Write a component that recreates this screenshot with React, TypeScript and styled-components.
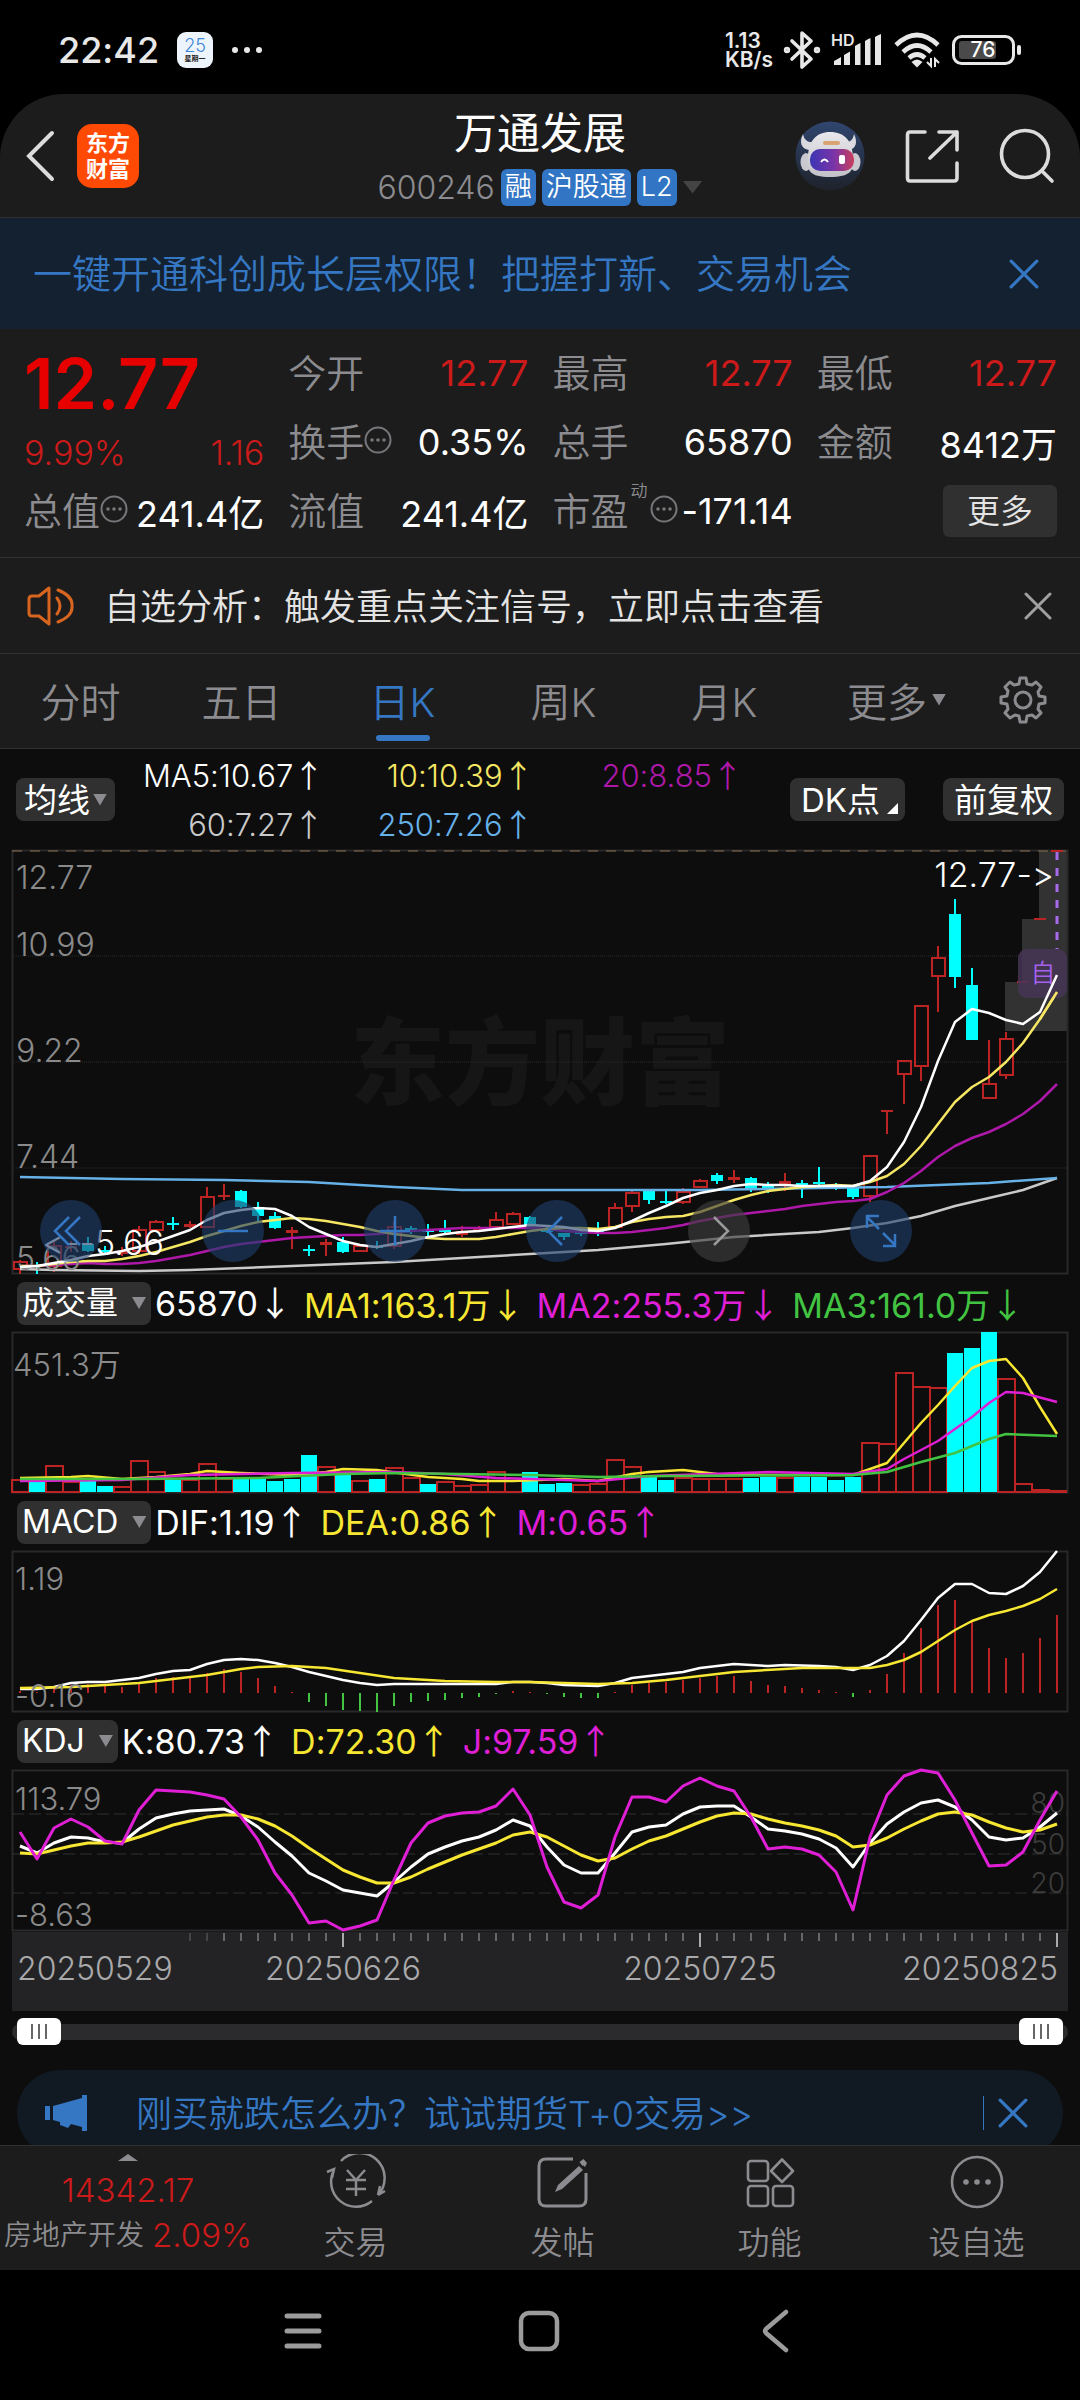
import React, { useState } from 'react';
import styled, { createGlobalStyle, css } from 'styled-components';

const color = {
  page: '#0d0d0d',
  panel: '#1c1c1c',
  line: '#303032',
  chip: '#303030',
  blue: '#3577c2',
  muted: '#8c8c90',
  text: '#e4e4e4',
  red: '#cc1a1a',
  candleRed: '#bb2423',
  cyan: '#00ffff',
  yellow: '#f7e733',
  softYellow: '#f5e663',
  magenta: '#df1fd6',
  purple: '#ad18a8',
  green: '#42c342',
  sky: '#66b1e8',
};

const fontStack = 'Inter, "Noto Sans CJK SC", sans-serif';

const GlobalStyle = createGlobalStyle`
  * { box-sizing: border-box; }
  body {
    margin: 0;
    background: #000;
    color: #fff;
    font-family: ${fontStack};
    font-weight: 350;
    font-feature-settings: "calt" 0;
  }
  button {
    padding: 0;
    border: 0;
    background: none;
    color: inherit;
    font: inherit;
    cursor: pointer;
  }
  a { color: inherit; text-decoration: none; }
  svg { display: block; flex: none; }
`;

const Phone = styled.div`
  min-height: 100vh;
  display: flex;
  flex-direction: column;
  background: #000;
`;

/* ---------- status bar ---------- */

const StatusBar = styled.div`
  height: 94px;
  padding: 6px 58px 0;
  display: flex;
  align-items: center;
  justify-content: space-between;
  color: #e8e8e8;
`;

const StatusGroup = styled.div<{ $gap: number }>`
  display: flex;
  align-items: center;
  gap: ${p => p.$gap}px;
`;

const Clock = styled.time`
  font-size: 36px;
  font-weight: 500;
`;

const CalendarBadge = styled.span`
  width: 36px;
  height: 36px;
  border-radius: 9px;
  background: #eef4fb;
  display: flex;
  flex-direction: column;
  align-items: center;
  justify-content: center;
  color: #3b86d8;
  font-size: 18px;
  line-height: 18px;
`;

const CalendarDay = styled.small`
  color: #222;
  font-size: 7px;
  line-height: 8px;
  font-weight: 700;
`;

const NetSpeed = styled.span`
  font-size: 21px;
  line-height: 19px;
  font-weight: 600;
`;

const StatusSvg = styled.svg`
  overflow: visible;
`;

/* ---------- app header ---------- */

const AppPanel = styled.div`
  flex: 1;
  display: flex;
  flex-direction: column;
  background: ${color.page};
  border-radius: 64px 64px 0 0;
  overflow: hidden;
`;

const Header = styled.header`
  display: grid;
  grid-template-columns: 1fr auto 1fr;
  align-items: center;
  padding: 12px 25px 3px;
  background: ${color.panel};
  border-bottom: 1px solid ${color.line};
`;

const HeaderSide = styled.div<{ $end?: boolean }>`
  display: flex;
  align-items: center;
  justify-content: ${p => (p.$end ? 'flex-end' : 'flex-start')};
  gap: ${p => (p.$end ? 40 : 22)}px;
  padding-bottom: 8px;
`;

const BrandLogo = styled.a`
  width: 62px;
  height: 64px;
  border-radius: 15px;
  background: #ff4a05;
  display: grid;
  place-content: center;
  text-align: center;
  font-size: 22px;
  line-height: 26px;
  font-weight: 700;
`;

const TitleBlock = styled.div`
  display: flex;
  flex-direction: column;
  align-items: center;
`;

const StockName = styled.h1`
  margin: 0;
  font-size: 43px;
  line-height: 54px;
  font-weight: 400;
`;

const CodeLine = styled.div`
  height: 54px;
  display: flex;
  align-items: center;
  gap: 6px;
  color: ${color.muted};
  font-size: 32px;
`;

const Badge = styled.span`
  height: 37px;
  padding: 0 4px;
  border-radius: 6px;
  background: #3175c4;
  color: #fff;
  font-size: 27px;
  line-height: 36px;
`;

const Triangle = styled.span<{ $up?: boolean; $w: number; $h: number; $c?: string }>`
  display: inline-block;
  flex: none;
  width: ${p => p.$w}px;
  height: ${p => p.$h}px;
  background: ${p => p.$c || color.muted};
  clip-path: ${p => (p.$up ? 'polygon(50% 0, 100% 100%, 0 100%)' : 'polygon(0 0, 100% 0, 50% 100%)')};
`;

/* ---------- banners ---------- */

const Promo = styled.div`
  height: 111px;
  padding: 0 41px 0 33px;
  display: flex;
  align-items: center;
  justify-content: space-between;
  background: #142130;
  color: ${color.blue};
  font-size: 39px;
`;

const PromoText = styled.a`
  padding-bottom: 6px;
`;

const Notice = styled.div`
  height: 96px;
  padding: 0 28px 0 26px;
  display: flex;
  align-items: center;
  background: ${color.panel};
  border-bottom: 1px solid ${color.line};
  color: ${color.text};
  font-size: 36px;
`;

const NoticeText = styled.a`
  flex: 1;
  margin-left: 28px;
  padding-bottom: 4px;
`;

/* ---------- quote ---------- */

const Quote = styled.section`
  display: grid;
  grid-template-columns: repeat(4, 1fr);
  grid-auto-rows: 69px;
  column-gap: 24px;
  padding: 9px 23px 12px 24px;
  background: ${color.panel};
  border-bottom: 1px solid ${color.line};
`;

const PriceBlock = styled.div`
  grid-row: span 2;
  display: flex;
  flex-direction: column;
`;

const Price = styled.strong`
  color: #e60000;
  font-size: 70px;
  line-height: 92px;
  font-weight: 600;
`;

const Change = styled.div`
  display: flex;
  justify-content: space-between;
  color: ${color.red};
  font-size: 34px;
  line-height: 46px;
`;

const Cell = styled.div`
  display: flex;
  align-items: center;
  justify-content: space-between;
  white-space: nowrap;
`;

const CellLabel = styled.span`
  display: flex;
  align-items: center;
  padding-bottom: 4px;
  color: ${color.muted};
  font-size: 38px;
`;

const CellNote = styled.sup`
  align-self: flex-start;
  margin: 0 2px;
  font-size: 17px;
  line-height: 20px;
`;

const CellValue = styled.span<{ $red?: boolean }>`
  font-size: 36px;
  font-weight: 400;
  color: ${p => (p.$red ? color.red : '#fff')};
`;

const MoreButton = styled.button`
  justify-self: end;
  align-self: center;
  width: 114px;
  height: 52px;
  border-radius: 6px;
  background: ${color.chip};
  color: ${color.text};
  font-size: 33px;
  line-height: 48px;
`;

/* ---------- period tabs ---------- */

const Tabs = styled.nav`
  height: 95px;
  padding-right: 22px;
  display: grid;
  grid-template-columns: repeat(5, 161fr) 183fr 70fr;
  background: ${color.panel};
  border-bottom: 1px solid ${color.line};
`;

const Tab = styled.button<{ $active?: boolean }>`
  position: relative;
  display: flex;
  align-items: center;
  justify-content: center;
  gap: 5px;
  padding-bottom: 3px;
  font-size: 40px;
  color: ${color.muted};
  ${p =>
    p.$active &&
    css`
      color: ${color.blue};
      &::after {
        content: '';
        position: absolute;
        left: 50%;
        bottom: 7px;
        width: 54px;
        height: 6px;
        margin-left: -27px;
        border-radius: 3px;
        background: ${color.blue};
      }
    `}
`;

/* ---------- indicator headings ---------- */

const Averages = styled.div`
  height: 101px;
  padding: 0 16px;
  display: flex;
  align-items: center;
`;

const AverageGrid = styled.div`
  flex: 1;
  max-width: 628px;
  margin-right: auto;
  display: grid;
  grid-template-columns: repeat(3, 1fr);
  grid-auto-rows: 49px;
  align-items: center;
  justify-items: end;
`;

const Reading = styled.span<{ $c: string; $small?: boolean }>`
  color: ${p => p.$c};
  font-size: ${p => (p.$small ? 31 : 34)}px;
  font-weight: ${p => (p.$small ? 350 : 400)};
  white-space: nowrap;
`;

const Arrow = styled.span`
  font-family: "Noto Sans CJK SC", sans-serif;
  line-height: 1;
`;

const Chip = styled.button<{ $pad?: number }>`
  height: 43px;
  padding: 0 ${p => p.$pad ?? 8}px;
  border-radius: 8px;
  background: ${color.chip};
  display: flex;
  align-items: center;
  gap: 3px;
  font-size: 33px;
  line-height: 40px;
  font-weight: 400;
  white-space: nowrap;
`;

const ChipGroup = styled.div`
  display: flex;
  gap: 38px;
`;

const Corner = styled.span`
  width: 11px;
  height: 11px;
  margin: 18px -4px 0 4px;
  background: #fff;
  clip-path: polygon(100% 0, 100% 100%, 0 100%);
`;

const IndicatorBar = styled.div`
  height: 58px;
  padding: 0 17px;
  display: flex;
  align-items: center;
  gap: 12px;
`;

const IndicatorLead = styled.div`
  display: flex;
  align-items: center;
  gap: 4px;
`;

const IndicatorChip = styled(Chip)`
  padding: 0 5px;
  gap: 14px;
  font-size: 32px;
`;

/* ---------- charts ---------- */

const ChartFrame = styled.div`
  position: relative;
  margin: 0 12px;
`;

const ChartSvg = styled.svg`
  width: 100%;
  height: auto;
  overflow: visible;
  font-family: ${fontStack};
`;

const ChartTools = styled.div`
  position: absolute;
  left: 28px;
  bottom: 12px;
  display: flex;
  gap: 100px;
`;

const ToolButton = styled.button<{ $off?: boolean }>`
  width: 62px;
  height: 62px;
  border-radius: 50%;
  display: grid;
  place-items: center;
  color: ${p => (p.$off ? '#9a9a9a' : color.blue)};
  background: ${p => (p.$off ? 'rgba(62, 62, 62, 0.65)' : 'rgba(30, 62, 106, 0.62)')};
`;

const RangeRow = styled.div`
  position: relative;
  height: 60px;
  margin: 0 12px;
  padding-top: 14px;
`;

const RangeTrack = styled.div`
  height: 16px;
  border-radius: 8px;
  background: #2b2b2d;
`;

const RangeInput = styled.input`
  appearance: none;
  position: absolute;
  top: 8px;
  left: 5px;
  width: calc(100% - 10px);
  height: 27px;
  margin: 0;
  background: transparent;
  pointer-events: none;
  &::-webkit-slider-thumb {
    appearance: none;
    pointer-events: auto;
    width: 44px;
    height: 27px;
    border-radius: 6px;
    background:
      linear-gradient(#666, #666) 14px 50% / 2px 15px no-repeat,
      linear-gradient(#666, #666) 21px 50% / 2px 15px no-repeat,
      linear-gradient(#666, #666) 28px 50% / 2px 15px no-repeat,
      #fff;
  }
`;

/* ---------- bottom ---------- */

const PillWindow = styled.div`
  height: 75px;
  margin: 0 17px;
  overflow: hidden;
`;

const Pill = styled.div`
  height: 86px;
  padding: 0 35px 0 28px;
  border-radius: 43px;
  display: flex;
  align-items: center;
  background: #111a23;
  color: ${color.blue};
  font-size: 36px;
`;

const PillText = styled.a`
  flex: 1;
  margin-left: 49px;
  padding-bottom: 5px;
`;

const PillDivider = styled.span`
  width: 1px;
  height: 34px;
  margin-right: 14px;
  background: ${color.blue};
`;

const BottomNav = styled.nav`
  height: 125px;
  display: grid;
  grid-template-columns: 252fr repeat(4, 207fr);
  background: ${color.panel};
  border-top: 1px solid ${color.line};
`;

const IndexLink = styled.a`
  padding: 8px 0 0 4px;
  display: flex;
  flex-direction: column;
  align-items: center;
  color: ${color.red};
  font-size: 33px;
  line-height: 45px;
  white-space: nowrap;
`;

const IndexValue = styled.span`
  margin-top: 7px;
`;

const IndexLine = styled.span`
  display: flex;
  align-items: center;
  gap: 8px;
`;

const Sector = styled.span`
  color: ${color.muted};
  font-size: 28px;
`;

const NavLink = styled.a`
  padding-top: 8px;
  display: flex;
  flex-direction: column;
  align-items: center;
  gap: 10px;
  color: ${color.muted};
  font-size: 32px;
  line-height: 46px;
`;

const SystemNav = styled.div`
  height: 130px;
  padding: 0 2px 8px 0;
  display: flex;
  align-items: center;
  justify-content: center;
`;

const SystemKey = styled.button`
  width: 236px;
  height: 60px;
  display: grid;
  place-items: center;
  color: #9b9b9b;
`;

/* ---------- data ---------- */

type Candle = [kind: 'r' | 'c', high: number, top: number, bottom: number, low: number];

const candles: Candle[] = [
  ['r', 410, 412, 419, 424], ['c', 412, 415, 417, 424], ['r', 391, 396, 416, 422], ['r', 391, 396, 398, 402],
  ['c', 387, 394, 401, 402], ['c', 396, 400, 402, 403], ['r', 397, 401, 404, 406], ['r', 376, 380, 401, 404],
  ['r', 370, 372, 380, 382], ['c', 367, 373, 375, 380], ['r', 371, 374, 377, 378], ['r', 337, 347, 377, 377],
  ['r', 334, 345, 347, 350], ['c', 340, 341, 357, 358], ['c', 352, 357, 366, 371], ['c', 362, 366, 378, 379],
  ['r', 377, 380, 383, 399], ['c', 395, 399, 401, 406], ['r', 389, 392, 395, 406], ['c', 387, 392, 402, 403],
  ['r', 394, 396, 401, 402], ['c', 391, 396, 398, 399], ['r', 371, 377, 396, 399], ['c', 376, 378, 380, 384],
  ['c', 374, 380, 381, 386], ['c', 370, 380, 382, 383], ['r', 376, 381, 385, 387], ['r', 376, 378, 380, 382],
  ['r', 362, 370, 377, 378], ['r', 362, 364, 374, 375], ['c', 366, 367, 375, 376], ['c', 377, 380, 382, 383],
  ['c', 383, 383, 387, 390], ['c', 377, 382, 383, 386], ['c', 372, 380, 382, 386], ['r', 353, 358, 377, 378],
  ['r', 339, 343, 356, 362], ['c', 340, 341, 350, 354], ['c', 340, 351, 353, 354], ['r', 338, 342, 352, 354],
  ['r', 329, 331, 337, 338], ['c', 323, 325, 331, 334], ['r', 320, 327, 330, 333], ['c', 327, 328, 339, 342],
  ['c', 332, 336, 337, 343], ['r', 323, 331, 334, 341], ['c', 330, 333, 336, 348], ['c', 317, 332, 334, 336],
  ['c', 333, 334, 336, 340], ['c', 338, 338, 347, 349], ['r', 305, 306, 346, 352], ['r', 260, 260, 262, 284],
  ['r', 210, 211, 224, 254], ['r', 155, 156, 216, 231], ['r', 96, 108, 126, 162], ['c', 49, 64, 127, 138],
  ['c', 118, 135, 190, 190], ['r', 190, 234, 248, 248], ['r', 182, 189, 225, 229], ['r', 132, 131, 133, 133],
  ['r', 69, 68, 70, 70], ['r', 0, 0, 1, 1],
];

const ma5 = [417,416,413,410,406,404,401,397,392,386,380,370,363,360,358,359,366,377,384,391,395,397,394,391,387,384,382,381,379,377,375,376,377,380,381,378,371,363,356,348,343,340,336,334,335,335,336,336,336,336,331,317,292,257,211,172,159,163,170,174,162,125];
const ma10 = [416,416,414,412,411,411,409,406,402,397,392,386,381,376,372,370,368,369,371,374,377,381,384,386,388,389,389,389,387,384,381,379,378,378,379,377,372,369,367,366,362,356,350,345,341,339,337,336,335,336,332,326,314,296,274,252,237,227,212,193,169,142];
const ma20 = [416,416,415,414,413,414,414,413,411,408,405,401,397,394,392,390,388,387,386,385,385,384,382,381,380,379,378,378,378,378,378,379,381,382,383,383,382,380,378,375,371,368,365,363,361,359,356,354,352,351,349,342,333,321,307,296,288,282,274,264,251,234];

type Sparse = [index: number, y: number][];
const ma60: Sparse = [[0,419],[2,420],[7,421],[10,420],[16,416],[22,412],[27,407],[31,403],[34,400],[38,394],[42,387],[47,382],[49,378],[51,373],[53,366],[55,356],[57,348],[59,340],[61,328]];
const ma250: Sparse = [[0,327],[6,329],[12,330],[17,332],[22,337],[26,340],[31,340],[40,340],[47,338],[51,337],[57,333],[61,328]];

const volumes = [147,149,133,149,149,154,154,128,139,148,147,131,146,147,147,149,147,123,134,143,148,147,135,145,152,149,153,152,139,148,140,152,151,152,151,127,134,145,148,145,146,146,146,146,145,145,145,145,148,145,110,111,40,54,55,21,16,0,46,151,157,158];
const volumeKinds = 'rcrrccrrrcrrrcccccrcrcrrcrrrrrcccrrrrccrrrrccrccccrrrrrcccrrrr';
const volMa1: Sparse = [[0,146],[3,145],[4,144],[6,147],[8,145],[10,142],[11,139],[13,141],[16,143],[18,140],[19,137],[21,138],[24,145],[26,147],[27,149],[29,149],[32,147],[34,149],[36,142],[37,140],[39,138],[41,142],[44,143],[49,143],[51,131],[52,111],[53,91],[54,73],[55,54],[56,36],[57,29],[58,27],[59,46],[60,75],[61,102]];
const volMa2: Sparse = [[0,149],[6,148],[10,143],[16,141],[22,140],[25,142],[28,146],[34,149],[37,144],[44,140],[49,142],[51,137],[52,127],[54,109],[55,97],[56,85],[57,71],[58,60],[59,61],[61,70]];
const volMa3: Sparse = [[0,147],[7,147],[14,146],[19,142],[22,141],[30,143],[34,145],[38,144],[49,143],[51,140],[53,130],[55,121],[57,107],[58,102],[61,104]];

const macdBars = [140,141,137,134,133,135,136,132,127,126,126,122,118,121,127,135,141,151,155,159,160,161,155,151,150,149,147,146,143,140,141,143,146,147,147,141,134,132,131,129,127,125,125,130,134,135,137,139,141,146,139,123,102,77,54,49,69,97,107,102,87,64];
const dif: Sparse = [[0,138],[1,138],[2,136],[3,132],[4,131],[5,131],[6,129],[7,127],[8,123],[9,120],[10,119],[11,113],[12,109],[13,108],[14,109],[15,112],[16,116],[17,121],[18,125],[19,129],[20,132],[21,134],[22,133],[28,133],[29,131],[30,131],[31,132],[32,134],[34,135],[35,132],[36,127],[37,125],[38,123],[39,121],[40,117],[41,115],[42,113],[43,114],[44,115],[45,114],[47,115],[48,116],[49,119],[50,114],[51,105],[52,90],[53,69],[54,47],[55,33],[56,33],[57,42],[58,43],[59,35],[60,21],[61,0]];
const dea: Sparse = [[0,137],[3,136],[7,132],[11,124],[13,118],[14,116],[16,115],[18,117],[20,122],[22,127],[25,130],[28,131],[30,131],[34,133],[36,132],[38,129],[40,125],[42,121],[46,117],[50,117],[51,114],[52,109],[53,101],[54,90],[55,79],[56,70],[57,64],[58,60],[59,55],[60,48],[61,38]];

const kLine = [76,83,73,67,68,72,73,59,48,44,41,40,39,46,57,72,86,103,111,120,123,126,112,97,84,77,71,67,60,50,56,77,95,103,103,83,62,57,55,44,37,36,36,47,59,61,64,69,78,97,73,54,42,33,30,37,50,67,70,68,57,43];
const dLine = [83,84,80,76,73,73,72,67,61,55,51,47,45,45,49,56,66,78,89,100,107,113,113,107,99,92,85,79,73,65,62,67,76,85,91,88,79,71,66,59,52,46,43,44,49,53,56,60,66,77,75,68,59,51,44,42,45,52,58,62,60,54];
const jLine = [62,89,58,49,57,71,74,40,20,21,22,25,29,47,70,103,125,153,151,160,156,150,110,73,53,46,43,42,36,19,45,97,132,138,125,67,27,27,32,16,8,16,21,47,79,77,79,85,102,140,67,25,6,0,3,30,63,96,95,82,50,21];

const xAt = (i: number) => 8 + 17 * i;
const dense = (ys: number[]) => ys.map((y, i) => `${xAt(i)},${y}`).join(' ');
const sparse = (pts: Sparse) => pts.map(([i, y]) => `${xAt(i)},${y}`).join(' ');

/* ---------- small drawings ---------- */

const Line = ({ points, stroke, w = 2.5 }: { points: string; stroke: string; w?: number }) => (
  <polyline points={points} fill="none" stroke={stroke} strokeWidth={w} strokeLinejoin="round" />
);

const CloseIcon = ({ size = 28, stroke = color.blue, w = 3 }) => (
  <svg width={size} height={size} viewBox="0 0 28 28" stroke={stroke} strokeWidth={w} strokeLinecap="round">
    <path d="M2 2 26 26M26 2 2 26" />
  </svg>
);

const InfoIcon = () => (
  <svg width="28" height="28" viewBox="0 0 28 28">
    <circle cx="14" cy="14" r="12.5" fill="none" stroke="#77777b" strokeWidth="2" />
    {[8, 14, 20].map(x => <circle key={x} cx={x} cy="14" r="1.8" fill="#77777b" />)}
  </svg>
);

const BluetoothIcon = () => (
  <StatusSvg width="36" height="40" viewBox="0 0 36 40" fill="none" stroke="#e8e8e8" strokeWidth="3.6" strokeLinejoin="round" strokeLinecap="round">
    <path d="M8 11 27 29 18 37V3L27 11 8 29" />
    <circle cx="3" cy="20" r="1.4" /><circle cx="33" cy="20" r="1.4" />
  </StatusSvg>
);

const SignalIcon = () => (
  <StatusSvg width="52" height="36" viewBox="0 0 52 36" fill="#e8e8e8">
    <text x="0" y="14" fontSize="16" fontWeight="600">HD</text>
    <path d="M3 33V29Q7 27 10 25V33zM13 23Q16 21 19 19.500V33H13zM24 14Q27 12 29.500 11V33H24zM34 9Q37 7 39.500 6V33H34zM44 5Q47 3 50 2V33H44z" />
  </StatusSvg>
);

const WifiIcon = () => (
  <StatusSvg width="47" height="36" viewBox="0 0 47 36" fill="none" stroke="#e8e8e8" strokeWidth="4.6">
    <path d="M2 13Q23 -7 44 13M9 20Q23 7 37 20M15 26Q23 19 31 26" />
    <path d="M17.500 30Q23 25 28.500 30L23 35.500z" fill="#e8e8e8" stroke="none" />
    <path d="M37 26V34L33 30M41 35V27L45 31" strokeWidth="2" />
  </StatusSvg>
);

const BatteryIcon = () => (
  <StatusSvg width="70" height="30" viewBox="0 0 70 30">
    <rect x="1.500" y="1.500" width="60" height="27" rx="8" fill="none" stroke="#e8e8e8" strokeWidth="3" />
    <rect x="7" y="6" width="37" height="18" rx="3" fill="#4a4a4a" />
    <rect x="65" y="10" width="4" height="10" rx="2" fill="#e8e8e8" />
    <text x="31" y="22" textAnchor="middle" fontSize="21" fontWeight="500" fill="#fff">76</text>
  </StatusSvg>
);

const RobotIcon = () => (
  <svg width="70" height="70" viewBox="0 0 70 70">
    <defs>
      <linearGradient id="sky" x1="0" y1="0" x2="0" y2="1">
        <stop offset="0" stopColor="#30466f" /><stop offset="1" stopColor="#1e222b" />
      </linearGradient>
      <linearGradient id="visor" x1="0" y1="0" x2="1" y2="0">
        <stop offset="0" stopColor="#3b36b4" /><stop offset=".55" stopColor="#7b34a8" /><stop offset="1" stopColor="#c93e5c" />
      </linearGradient>
      <linearGradient id="helmet" x1="0" y1="0" x2="0" y2="1">
        <stop offset="0" stopColor="#e8e8ec" /><stop offset="1" stopColor="#c3c2c8" />
      </linearGradient>
    </defs>
    <circle cx="35" cy="35" r="34.500" fill="url(#sky)" />
    <path d="M8 13C4 21 6 28 14 29L20 21C13 22 9 19 8 13zM59 13C63 21 61 28 54 29L48 21C55 22 58 19 59 13z" fill="#d9d9de" />
    <ellipse cx="11" cy="41" rx="5.500" ry="9" fill="#c9c8cf" />
    <ellipse cx="60" cy="41" rx="5.500" ry="9" fill="#c9c8cf" />
    <path d="M35 11C50 11 57 20 58 35C60 50 55 56 35 56C15 56 11 50 13 35C14 20 21 11 35 11z" fill="url(#helmet)" />
    <rect x="28" y="20" width="17" height="4" rx="2" fill="#d9a374" />
    <rect x="15" y="28" width="44" height="22" rx="10" fill="url(#visor)" />
    <path d="M26 41Q29.500 36 33 41" fill="none" stroke="#fff" strokeWidth="2" />
    <rect x="44" y="34" width="6" height="9" rx="2" fill="#fff" />
  </svg>
);

const GearIcon = () => {
  const teeth = Array.from({ length: 8 }, (_, k) => k * 45);
  const outline = teeth
    .map(deg => [-15, -9, 9, 15].map((off, n) => {
      const r = n === 1 || n === 2 ? 22 : 17;
      const a = ((deg + off - 90) * Math.PI) / 180;
      return `${Math.round(24 + r * Math.cos(a))},${Math.round(24 + r * Math.sin(a))}`;
    }).join(' '))
    .join(' ');
  return (
    <svg width="48" height="48" viewBox="0 0 48 48" fill="none" stroke={color.muted} strokeWidth="3" strokeLinejoin="round">
      <polygon points={outline} />
      <circle cx="24" cy="24" r="8" />
    </svg>
  );
};

const navIcons = {
  trade: (
    <svg width="62" height="56" viewBox="0 0 62 56" fill="none" stroke={color.muted} strokeWidth="2.500">
      <path d="M16 7A25 25 0 0 1 53 41M53 41 55 32M53 41 60 37" />
      <path d="M47 47A25 25 0 0 1 9 16M2 18 9 15 7 24" />
      <path d="M22 16 31 26 40 16M21 26H41M21 35H41M31 26V42" />
    </svg>
  ),
  post: (
    <svg width="54" height="56" viewBox="0 0 54 56" fill="none" stroke={color.muted} strokeWidth="3">
      <path d="M37 5H10Q3 5 3 12V45Q3 52 10 52H43Q50 52 50 45V19" />
      <path d="M43 12 47 16 26 35 19 38 22 31zM45 9 48 6 51 9 49 13z" fill={color.muted} stroke="none" />
      <path d="M45 10 49 7" strokeWidth="5" />
    </svg>
  ),
  features: (
    <svg width="50" height="56" viewBox="0 0 50 56" fill="none" stroke={color.muted} strokeWidth="2.600" strokeLinejoin="round">
      <rect x="3" y="7" width="20" height="20" rx="3" />
      <rect x="3" y="32" width="20" height="20" rx="3" />
      <rect x="28" y="32" width="20" height="20" rx="3" />
      <path d="M37 5.500 48 17 37 28 26 17z" />
    </svg>
  ),
  watch: (
    <svg width="54" height="56" viewBox="0 0 54 56">
      <circle cx="27" cy="28" r="25" fill="none" stroke={color.muted} strokeWidth="2.600" />
      {[16, 27, 38].map(x => <circle key={x} cx={x} cy="28" r="2.800" fill={color.muted} />)}
    </svg>
  ),
};

const toolIcons = [
  { name: '最左', path: 'M17 5 3 19 17 33M28 5 14 19 28 33' },
  { name: '缩小', path: 'M4 19H34' },
  { name: '放大', path: 'M4 19H34M19 4V34' },
  { name: '左移', path: 'M24 5 10 19 24 33' },
  { name: '右移', path: 'M14 5 28 19 14 33', off: true },
  { name: '全屏', path: 'M17 17 5 5M5 16V4H17M21 21 33 33M33 22V34H21' },
];

/* ---------- charts ---------- */

const label = { fill: '#8a8a8a', fontSize: 31 };

const PriceChart = () => (
  <ChartSvg viewBox="0 0 1056 424" role="img" aria-label="日K线">
    <text x="338" y="248" fontSize="95" fontWeight="900" fill="#161616">东方财富</text>
    <path d="M1027 0H1055V181H993V132H1010V69H1027z" fill="#323232" />
    <rect x="0.500" y="0.500" width="1055" height="423" fill="none" stroke="#29292b" strokeWidth="2" />
    <path d="M0 106H1056M0 212H1056M0 318H1056" stroke="#2a2a2a" strokeDasharray="1 1" />
    <path d="M0 1H1056" stroke="#8b7152" strokeDasharray="10 8" />
    {candles.map(([kind, high, top, bottom, low], i) => {
      const c = kind === 'r' ? color.candleRed : color.cyan;
      const hollow = kind === 'r' && bottom - top > 4;
      const h = Math.max(bottom - top, 2);
      return (
        <g key={i} stroke={c} strokeWidth="2" fill={hollow ? 'none' : c}>
          {high < top && <path d={`M${xAt(i)} ${high}V${top}`} />}
          {low > bottom && <path d={`M${xAt(i)} ${bottom}V${low}`} />}
          {hollow
            ? <rect x={xAt(i) - 6} y={top} width="13" height={h} />
            : <rect x={xAt(i) - 6} y={top} width="12" height={h} stroke="none" />}
        </g>
      );
    })}
    <Line points={sparse(ma60)} stroke="#c9c9c9" />
    <Line points={sparse(ma250)} stroke={color.sky} />
    <Line points={dense(ma20)} stroke={color.purple} />
    <Line points={dense(ma10)} stroke={color.softYellow} />
    <g {...label} fontSize="32">
      <text x="4" y="39">12.77</text>
      <text x="4" y="106">10.99</text>
      <text x="4" y="212">9.22</text>
      <text x="4" y="318">7.44</text>
      <text x="4" y="420">5.66</text>
    </g>
    <path d="M1045 2V99" stroke="#a66bea" strokeWidth="3" strokeDasharray="8 8" />
    <rect x="1006" y="99" width="49" height="49" rx="9" fill="#463556" fillOpacity=".85" />
    <text x="1031" y="132" fontSize="25" textAnchor="middle" fill="#a461ee">自</text>
    <Line points={dense(ma5)} stroke="#fff" />
    <Line points="1028,169 1045,142" stroke={color.softYellow} />
    <text x="1042" y="37" fontSize="34" textAnchor="end" fill="#fff">12.77-&gt;</text>
    <text x="30" y="405" fontSize="34" fill="#fff">&lt;--5.66</text>
  </ChartSvg>
);

const SubFrame = () => (
  <rect x="0.500" y="0.500" width="1055" height="160" fill="none" stroke="#29292b" strokeWidth="2" />
);

const VolumeChart = () => (
  <ChartSvg viewBox="0 0 1056 161" role="img" aria-label="成交量">
    <SubFrame />
    {volumes.map((top, i) =>
      volumeKinds[i] === 'c'
        ? <rect key={i} x={xAt(i) - 8} y={top} width="16" height={160 - top} fill={color.cyan} />
        : <rect key={i} x={xAt(i) - 8} y={top + 1} width="17" height={159 - top} fill="none" stroke={color.candleRed} strokeWidth="2" />
    )}
    <Line points={sparse(volMa1)} stroke={color.yellow} />
    <Line points={sparse(volMa2)} stroke={color.magenta} />
    <Line points={sparse(volMa3)} stroke={color.green} />
    <text x="1" y="44" {...label}>451.3万</text>
  </ChartSvg>
);

const MacdChart = () => (
  <ChartSvg viewBox="0 0 1056 161" role="img" aria-label="MACD">
    <SubFrame />
    {macdBars.map((end, i) => (
      <path key={i} d={`M${xAt(i)} 142V${end}`} strokeWidth="2" stroke={end > 142 ? color.green : color.candleRed} />
    ))}
    <Line points={sparse(dif)} stroke="#fff" />
    <Line points={sparse(dea)} stroke={color.yellow} />
    <text x="3" y="39" {...label}>1.19</text>
    <text x="3" y="156" {...label}>-0.16</text>
  </ChartSvg>
);

const KdjChart = () => (
  <ChartSvg viewBox="0 0 1056 161" role="img" aria-label="KDJ">
    <SubFrame />
    <path d="M0 44H1056M0 84H1056M0 123H1056" stroke="#303030" strokeWidth="1" strokeDasharray="12 5" />
    <g fontSize="28" fill="#3c3c3c" textAnchor="end">
      <text x="1053" y="43">80</text>
      <text x="1053" y="84">50</text>
      <text x="1053" y="123">20</text>
    </g>
    <Line points={dense(kLine)} stroke="#fff" w={3} />
    <Line points={dense(dLine)} stroke={color.yellow} w={3} />
    <Line points={dense(jLine)} stroke={color.magenta} w={3} />
    <text x="3" y="40" {...label}>113.79</text>
    <text x="3" y="156" {...label}>-8.63</text>
  </ChartSvg>
);

const TimeAxis = () => (
  <ChartSvg viewBox="0 0 1056 79" role="img" aria-label="日期">
    <rect width="1056" height="79" y="1" fill="#232325" />
    {Array.from({ length: 52 }, (_, k) => k + 10).map(i => {
      const major = i === 19 || i === 40 || i === 61;
      return <path key={i} d={`M${xAt(i)} 2V${major ? 16 : 10}`} stroke="#aaa" strokeWidth={major ? 2 : 1} opacity={i < 12 ? 0.5 : 1} />;
    })}
    <g fill="#a9a9ab" fontSize="32">
      <text x="5" y="49">20250529</text>
      <text x="331" y="49" textAnchor="middle">20250626</text>
      <text x="688" y="49" textAnchor="middle">20250725</text>
      <text x="1046" y="49" textAnchor="end">20250825</text>
    </g>
  </ChartSvg>
);

/* ---------- page ---------- */

const Value = ({ c, text, dir, small }: { c: string; text: string; dir: '↑' | '↓'; small?: boolean }) => (
  <Reading $c={c} $small={small}>{text}<Arrow>{dir}</Arrow></Reading>
);

const IndicatorHead = ({ name, first, children }: { name: string; first: React.ReactNode; children: React.ReactNode }) => (
  <IndicatorBar>
    <IndicatorLead>
      <IndicatorChip type="button">{name}<Triangle $w={14} $h={12} /></IndicatorChip>
      {first}
    </IndicatorLead>
    {children}
  </IndicatorBar>
);

const tabs = ['分时', '五日', '日K', '周K', '月K'];

export default function App() {
  const [tab, setTab] = useState('日K');
  const [from, setFrom] = useState(0);
  const [to, setTo] = useState(100);

  return (
    <Phone>
      <GlobalStyle />
      <StatusBar>
        <StatusGroup $gap={18}>
          <Clock>22:42</Clock>
          <CalendarBadge>25<CalendarDay>星期一</CalendarDay></CalendarBadge>
          <svg width="32" height="8" viewBox="0 0 32 8" fill="#e8e8e8">
            <circle cx="4" cy="4" r="3" /><circle cx="16" cy="4" r="3" /><circle cx="28" cy="4" r="3" />
          </svg>
        </StatusGroup>
        <StatusGroup $gap={11}>
          <NetSpeed>1.13<br />KB/s</NetSpeed>
          <BluetoothIcon />
          <SignalIcon />
          <WifiIcon />
          <BatteryIcon />
        </StatusGroup>
      </StatusBar>

      <AppPanel>
        <Header>
          <HeaderSide>
            <button type="button" aria-label="返回">
              <svg width="30" height="52" viewBox="0 0 30 52" fill="none" stroke="#dcdcdc" strokeWidth="4" strokeLinecap="round">
                <path d="M27 3 4 26 27 49" />
              </svg>
            </button>
            <BrandLogo href="#home">东方<br />财富</BrandLogo>
          </HeaderSide>
          <TitleBlock>
            <StockName>万通发展</StockName>
            <CodeLine>
              600246<Badge>融</Badge><Badge>沪股通</Badge><Badge>L2</Badge>
              <Triangle $w={20} $h={13} $c="#444" />
            </CodeLine>
          </TitleBlock>
          <HeaderSide $end>
            <button type="button" aria-label="智能助手"><RobotIcon /></button>
            <button type="button" aria-label="分享">
              <svg width="54" height="54" viewBox="0 0 54 54" fill="none" stroke="#dcdcdc" strokeWidth="3.600" strokeLinecap="round" strokeLinejoin="round">
                <path d="M20 3H5Q2.500 3 2.500 6V49Q2.500 52 5 52H49Q52 52 52 49V34M34 3H52V21M52 3 25 29" />
              </svg>
            </button>
            <button type="button" aria-label="搜索">
              <svg width="56" height="56" viewBox="0 0 56 56" fill="none" stroke="#dcdcdc" strokeWidth="3.600" strokeLinecap="round">
                <circle cx="26" cy="26" r="23.500" /><path d="M43 43 53 53" />
              </svg>
            </button>
          </HeaderSide>
        </Header>

        <Promo>
          <PromoText href="#promo">一键开通科创成长层权限！把握打新、交易机会</PromoText>
          <button type="button" aria-label="关闭"><CloseIcon size={30} /></button>
        </Promo>

        <Quote>
          <PriceBlock>
            <Price>12.77</Price>
            <Change><span>9.99%</span><span>1.16</span></Change>
          </PriceBlock>
          <Cell><CellLabel>今开</CellLabel><CellValue $red>12.77</CellValue></Cell>
          <Cell><CellLabel>最高</CellLabel><CellValue $red>12.77</CellValue></Cell>
          <Cell><CellLabel>最低</CellLabel><CellValue $red>12.77</CellValue></Cell>
          <Cell><CellLabel>换手<InfoIcon /></CellLabel><CellValue>0.35%</CellValue></Cell>
          <Cell><CellLabel>总手</CellLabel><CellValue>65870</CellValue></Cell>
          <Cell><CellLabel>金额</CellLabel><CellValue>8412万</CellValue></Cell>
          <Cell><CellLabel>总值<InfoIcon /></CellLabel><CellValue>241.4亿</CellValue></Cell>
          <Cell><CellLabel>流值</CellLabel><CellValue>241.4亿</CellValue></Cell>
          <Cell><CellLabel>市盈<CellNote>动</CellNote><InfoIcon /></CellLabel><CellValue>-171.14</CellValue></Cell>
          <MoreButton type="button">更多</MoreButton>
        </Quote>

        <Notice>
          <svg width="50" height="40" viewBox="0 0 50 40" fill="none" stroke="#d8651f" strokeWidth="3" strokeLinejoin="round" strokeLinecap="round">
            <path d="M23 2 13 10H6Q3 10 3 13V27Q3 30 6 30H13L23 38zM31 12Q37 20 31 28M32 4Q47 10 46 20Q47 30 32 36" />
          </svg>
          <NoticeText href="#signal">自选分析：触发重点关注信号，立即点击查看</NoticeText>
          <button type="button" aria-label="关闭"><CloseIcon stroke="#a0a0a0" /></button>
        </Notice>

        <Tabs>
          {tabs.map(name => (
            <Tab key={name} type="button" $active={name === tab} onClick={() => setTab(name)}>{name}</Tab>
          ))}
          <Tab type="button">更多<Triangle $w={14} $h={12} /></Tab>
          <Tab type="button" aria-label="设置"><GearIcon /></Tab>
        </Tabs>

        <Averages>
          <Chip type="button">均线<Triangle $w={14} $h={12} /></Chip>
          <AverageGrid>
            <Value small c="#fff" text="MA5:10.67" dir="↑" />
            <Value small c={color.softYellow} text="10:10.39" dir="↑" />
            <Value small c={color.purple} text="20:8.85" dir="↑" />
            <Value small c="#c9c9c9" text="60:7.27" dir="↑" />
            <Value small c={color.sky} text="250:7.26" dir="↑" />
          </AverageGrid>
          <ChipGroup>
            <Chip type="button" $pad={11}>DK点<Corner /></Chip>
            <Chip type="button" $pad={11}>前复权</Chip>
          </ChipGroup>
        </Averages>

        <ChartFrame>
          <PriceChart />
          <ChartTools>
            {toolIcons.map(t => (
              <ToolButton key={t.name} type="button" aria-label={t.name} $off={t.off} disabled={t.off}>
                <svg width="38" height="38" viewBox="0 0 38 38" fill="none" stroke="currentColor" strokeWidth="2.500">
                  <path d={t.path} />
                </svg>
              </ToolButton>
            ))}
          </ChartTools>
        </ChartFrame>

        <IndicatorHead name="成交量" first={<Value c="#fff" text="65870" dir="↓" />}>
          <Value c={color.yellow} text="MA1:163.1万" dir="↓" />
          <Value c={color.magenta} text="MA2:255.3万" dir="↓" />
          <Value c={color.green} text="MA3:161.0万" dir="↓" />
        </IndicatorHead>
        <ChartFrame><VolumeChart /></ChartFrame>

        <IndicatorHead name="MACD" first={<Value c="#fff" text="DIF:1.19" dir="↑" />}>
          <Value c={color.yellow} text="DEA:0.86" dir="↑" />
          <Value c={color.magenta} text="M:0.65" dir="↑" />
        </IndicatorHead>
        <ChartFrame><MacdChart /></ChartFrame>

        <IndicatorHead name="KDJ" first={<Value c="#fff" text="K:80.73" dir="↑" />}>
          <Value c={color.yellow} text="D:72.30" dir="↑" />
          <Value c={color.magenta} text="J:97.59" dir="↑" />
        </IndicatorHead>
        <ChartFrame><KdjChart /></ChartFrame>
        <ChartFrame><TimeAxis /></ChartFrame>

        <RangeRow>
          <RangeTrack />
          <RangeInput type="range" aria-label="起始日期" value={from} onChange={e => setFrom(Math.min(+e.target.value, to))} />
          <RangeInput type="range" aria-label="结束日期" value={to} onChange={e => setTo(Math.max(+e.target.value, from))} />
        </RangeRow>

        <PillWindow>
          <Pill>
            <svg width="42" height="38" viewBox="0 0 42 38" fill={color.blue}>
              <path d="M0 12H5V26H0zM8 12 37 4V1H42V37H37V33L26 30 23 34 15 31V28L8 26z" />
            </svg>
            <PillText href="#futures">刚买就跌怎么办？试试期货T+0交易&gt;&gt;</PillText>
            <PillDivider />
            <button type="button" aria-label="关闭"><CloseIcon size={30} /></button>
          </Pill>
        </PillWindow>

        <BottomNav>
          <IndexLink href="#index">
            <Triangle $up $w={20} $h={7} />
            <IndexValue>14342.17</IndexValue>
            <IndexLine><Sector>房地产开发</Sector>2.09%</IndexLine>
          </IndexLink>
          <NavLink href="#trade">{navIcons.trade}交易</NavLink>
          <NavLink href="#post">{navIcons.post}发帖</NavLink>
          <NavLink href="#features">{navIcons.features}功能</NavLink>
          <NavLink href="#watch">{navIcons.watch}设自选</NavLink>
        </BottomNav>
      </AppPanel>

      <SystemNav>
        <SystemKey type="button" aria-label="最近任务">
          <svg width="40" height="40" viewBox="0 0 40 40" stroke="currentColor" strokeWidth="5" strokeLinecap="round">
            <path d="M4 5H36M4 20H36M4 35H36" />
          </svg>
        </SystemKey>
        <SystemKey type="button" aria-label="主屏幕">
          <svg width="42" height="42" viewBox="0 0 42 42" fill="none" stroke="currentColor" strokeWidth="4.500">
            <rect x="3" y="3" width="36" height="36" rx="8" />
          </svg>
        </SystemKey>
        <SystemKey type="button" aria-label="返回">
          <svg width="28" height="44" viewBox="0 0 28 44" fill="none" stroke="currentColor" strokeWidth="4.500" strokeLinecap="round">
            <path d="M25 3 5 20Q3 22 5 24L25 41" />
          </svg>
        </SystemKey>
      </SystemNav>
    </Phone>
  );
}
